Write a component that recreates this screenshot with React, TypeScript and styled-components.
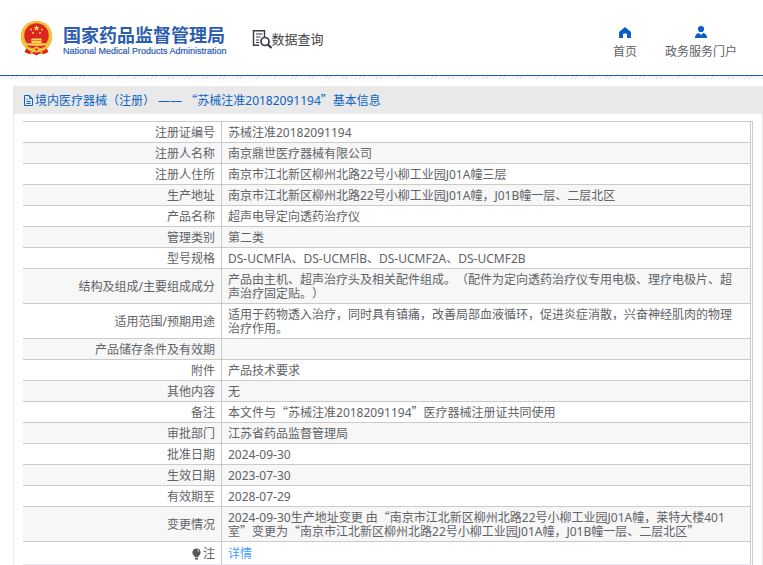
import React from "react";
import styled, { createGlobalStyle } from "styled-components";

const GlobalStyle = createGlobalStyle`
  * { box-sizing: border-box; }
  body {
    margin: 0;
    background: #fff;
    color: #606266;
    font-family: "Noto Sans", "Noto Sans CJK SC", sans-serif;
    font-size: 12px;
    line-height: 14px;
    text-spacing-trim: space-all;
  }
`;

const Header = styled.header`
  display: flex;
  align-items: flex-start;
  height: 79px;
  padding: 20px 26px 0 20px;
  background:
    linear-gradient(#1b5fb4, #1b5fb4) 0 75px / 100% 1px no-repeat,
    repeating-linear-gradient(135deg, #e4e4e4 0 1px, #fff 1px 3px) 0 76px / 100% 3px no-repeat;
`;

const Brand = styled.a`
  display: flex;
  align-items: flex-start;
  gap: 10px;
  color: #2c5db0;
  text-decoration: none;
`;

const BrandText = styled.span`
  display: flex;
  flex-direction: column;
  padding-top: 4px;
  white-space: nowrap;
`;

const BrandName = styled.strong`
  font-family: "Noto Sans CJK SC", sans-serif;
  font-size: 18px;
  line-height: 20px;
  font-weight: 700;
`;

const BrandEnglish = styled.span`
  font-family: "Liberation Sans", sans-serif;
  font-size: 9px;
  line-height: 14px;
  -webkit-text-stroke: 0.2px #2c5db0;
`;

const Section = styled.div`
  display: flex;
  align-items: center;
  margin: 9px 0 0 25px;
  color: #444;
  font-size: 13px;
  line-height: 20px;
  white-space: nowrap;
`;

const Nav = styled.nav`
  display: flex;
  gap: 28px;
  margin: 5px 0 0 auto;
`;

const NavLink = styled.a`
  display: flex;
  flex-direction: column;
  align-items: center;
  gap: 5px;
  color: #606266;
  line-height: 16px;
  text-decoration: none;
  white-space: nowrap;
`;

const Panel = styled.main`
  margin: 7px 0 0 13px;
  border: 1px solid #e9e9e9;
  border-width: 0 1px;
`;

const PanelTitle = styled.h1`
  display: flex;
  align-items: center;
  height: 28px;
  margin: 0 0 7px;
  padding: 2px 0 0 9px;
  background: #e9e9e9;
  color: #0b63c5;
  font-size: 12px;
  font-weight: 400;
`;

const TableFrame = styled.div`
  margin: 0 9px;
  padding-right: 1px;
  border-top: 1px solid #cacaca;
  border-right: 1px solid #cacacf;
`;

const Table = styled.table`
  width: 100%;
  table-layout: fixed;
  border-collapse: separate;
  border-spacing: 0;
`;

const Row = styled.tr`
  &:nth-child(even) { background: #f7f7f7; }
  &:last-child > * {
    height: 23px;
    border-bottom-color: #e6e9f5;
  }
`;

const Label = styled.th`
  width: 199px;
  padding: 4px 6px 2px 0;
  border: 1px solid #cacaca;
  border-width: 0 1px 1px 0;
  font-weight: 400;
  text-align: right;
  vertical-align: middle;
`;

const Value = styled.td`
  height: 21px;
  padding: 4px 12px 2px 6px;
  border: 1px solid #cacaca;
  border-width: 0 1px 1px 0;
  vertical-align: middle;
`;

const Quote = styled.span`
  font-family: "Noto Sans CJK SC", sans-serif;
  line-height: 1;
`;

const DetailLink = styled.a`
  color: #409eff;
  text-decoration: none;
`;

const BulbLabel = styled.span`
  display: inline-flex;
  align-items: center;
  gap: 2px;
  vertical-align: top;
`;

/* Sets curly quotes in the Chinese face so that they take a full character cell. */
const Text = ({ children }: { children: string }) => (
  <>
    {children.split(/([“”])/).map((part, i) =>
      part === "“" || part === "”" ? <Quote key={i}>{part}</Quote> : part
    )}
  </>
);

const Emblem = () => (
  <svg width="33" height="36" viewBox="0 0 33 36" aria-hidden="true">
    <path d="M7 27 4.500 32l4.500 2 4-.5 3.500 2 3.500-2 4 .5 4.500-2L26 27z" fill="#d8201e" />
    <circle cx="16.500" cy="16.500" r="15.800" fill="#efb92f" />
    <circle cx="16.500" cy="16.500" r="14.300" fill="none" stroke="#f8d763" strokeWidth="1" strokeDasharray="2 1" />
    <circle cx="16.500" cy="15.500" r="12.200" fill="#dc2420" />
    <path d="m16.500 5.200.9 2h2.200l-1.700 1.400.7 2.200-2.100-1.300-2.100 1.300.7-2.200-1.700-1.400h2.200z" fill="#ffe066" />
    <g fill="#ffd34d">
      <circle cx="11" cy="9.500" r="1" />
      <circle cx="22" cy="9.500" r="1" />
      <circle cx="13" cy="13" r="1" />
      <circle cx="20" cy="13" r="1" />
      <path d="M12 18.500h9l1.500 2h-12zM11.500 21h10v2h-10zM7 23.200h19l-1.500 2.600h-16z" />
    </g>
    <path d="M8 26q8.500 3.500 17 0" fill="none" stroke="#dc2420" strokeWidth="1.500" />
    <circle cx="16.500" cy="29.500" r="3" fill="#f6c53e" />
    <circle cx="16.500" cy="29.500" r="1.200" fill="#dc2420" />
    <path d="m9 29 4 1.500M24 29l-4 1.500M10 33l4-1.500M23 33l-4-1.500" stroke="#f6c53e" strokeWidth="1" />
  </svg>
);

const SearchDoc = () => (
  <svg width="20" height="20" viewBox="0 0 20 20" fill="none" stroke="#35374a" aria-hidden="true">
    <path d="M12.500 6V1.800h-11v14.400H7M12.500 1.800V8" strokeWidth="1.400" />
    <path d="M4 5h6.500M4 8h4.500M4 11h3M4 13.500h3" strokeWidth="1.100" />
    <circle cx="13" cy="12.500" r="4" strokeWidth="1.700" />
    <path d="m16 15.500 3.500 3.500" strokeWidth="2.200" />
  </svg>
);

const HomeIcon = () => (
  <svg width="14" height="14" viewBox="0 0 14 14" fill="#0b5fc4" aria-hidden="true">
    <path d="M7 2 13 7v6H9V9.500a1 1 0 0 0-1-1H6a1 1 0 0 0-1 1V13H1V7z" />
  </svg>
);

const UserIcon = () => (
  <svg width="14" height="14" viewBox="0 0 14 14" fill="#0b5fc4" aria-hidden="true">
    <circle cx="7" cy="4" r="3.100" />
    <path d="M1 13c0-3 1.500-4.500 4-5l2 2 2-2c2.500.5 4 2 4 5z" />
  </svg>
);

const FileIcon = () => (
  <svg width="12" height="12" viewBox="0 0 12 12" fill="none" stroke="#0b63c5" strokeWidth="1" aria-hidden="true">
    <path d="M1.500.5h5l3 3v7h-8zM6.500.5v3h3M3.500 4.500h1M3.500 6.500h4M3.500 8.500h4" />
  </svg>
);

const BulbIcon = () => (
  <svg width="9" height="12" viewBox="0 0 9 12" aria-hidden="true">
    <path d="M4.500.5a4 4 0 0 1 2.300 7.300L6.300 9H2.700l-.5-1.200A4 4 0 0 1 4.500.5M3 9.700h3v1.800H3z" fill="#55585e" />
    <path d="M5 2q1.500.3 1.700 2" fill="none" stroke="#d5d5d5" strokeWidth=".8" />
  </svg>
);

const rows: [string, string][] = [
  ["注册证编号", "苏械注准20182091194"],
  ["注册人名称", "南京鼎世医疗器械有限公司"],
  ["注册人住所", "南京市江北新区柳州北路22号小柳工业园J01A幢三层"],
  ["生产地址", "南京市江北新区柳州北路22号小柳工业园J01A幢，J01B幢一层、二层北区"],
  ["产品名称", "超声电导定向透药治疗仪"],
  ["管理类别", "第二类"],
  ["型号规格", "DS-UCMFlA、DS-UCMFlB、DS-UCMF2A、DS-UCMF2B"],
  ["结构及组成/主要组成成分", "产品由主机、超声治疗头及相关配件组成。（配件为定向透药治疗仪专用电极、理疗电极片、超声治疗固定贴。）"],
  ["适用范围/预期用途", "适用于药物透入治疗，同时具有镇痛，改善局部血液循环，促进炎症消散，兴奋神经肌肉的物理治疗作用。"],
  ["产品储存条件及有效期", ""],
  ["附件", "产品技术要求"],
  ["其他内容", "无"],
  ["备注", "本文件与“苏械注准20182091194”医疗器械注册证共同使用"],
  ["审批部门", "江苏省药品监督管理局"],
  ["批准日期", "2024-09-30"],
  ["生效日期", "2023-07-30"],
  ["有效期至", "2028-07-29"],
  ["变更情况", "2024-09-30生产地址变更 由“南京市江北新区柳州北路22号小柳工业园J01A幢，莱特大楼401室”变更为“南京市江北新区柳州北路22号小柳工业园J01A幢，J01B幢一层、二层北区”"],
];

export default function App() {
  return (
    <>
      <GlobalStyle />
      <Header>
        <Brand href="#">
          <Emblem />
          <BrandText>
            <BrandName>国家药品监督管理局</BrandName>
            <BrandEnglish>National Medical Products Administration</BrandEnglish>
          </BrandText>
        </Brand>
        <Section>
          <SearchDoc />
          数据查询
        </Section>
        <Nav>
          <NavLink href="#"><HomeIcon />首页</NavLink>
          <NavLink href="#"><UserIcon />政务服务门户</NavLink>
        </Nav>
      </Header>
      <Panel>
        <PanelTitle>
          <FileIcon />
          <span><Text>境内医疗器械（注册） —— “苏械注准20182091194”基本信息</Text></span>
        </PanelTitle>
        <TableFrame>
          <Table>
            <tbody>
              {rows.map(([label, value]) => (
                <Row key={label}>
                  <Label scope="row">{label}</Label>
                  <Value><Text>{value}</Text></Value>
                </Row>
              ))}
              <Row>
                <Label scope="row"><BulbLabel><BulbIcon />注</BulbLabel></Label>
                <Value><DetailLink href="#">详情</DetailLink></Value>
              </Row>
            </tbody>
          </Table>
        </TableFrame>
      </Panel>
    </>
  );
}
